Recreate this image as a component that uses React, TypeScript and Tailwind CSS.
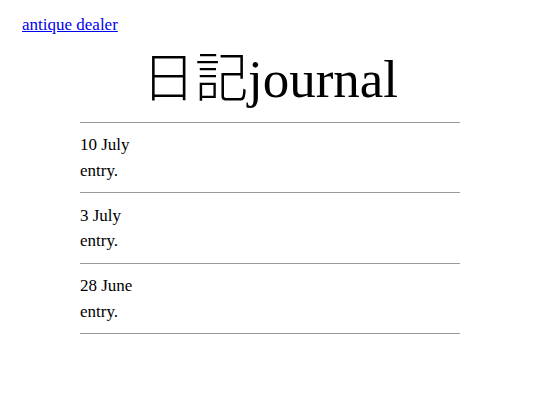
import React from "react";

const entries = [
  { date: "10 July", text: "entry." },
  { date: "3 July", text: "entry." },
  { date: "28 June", text: "entry." },
];

export default function App() {
  return (
    <div
      className="min-h-[405px] w-[540px] bg-white text-black text-[17px]"
      style={{ fontFamily: '"Liberation Serif", "Noto Sans CJK JP", serif' }}
    >
      <div className="pl-[22px] pt-[15px] leading-[19.5px]">
        <a href="#" className="text-[#0000ee] underline">
          antique dealer
        </a>
      </div>
      <h1 className="mt-[18px] text-center text-[53px] leading-[53px] font-normal">
        <span className="font-extralight">日記</span>journal
      </h1>
      <div className="mx-auto mt-[16.5px] w-[380px]">
        {entries.map((e) => (
          <div
            key={e.date}
            className="border-t border-[#9a9a9a] pt-[9.4px] pb-[9px] leading-[25.5px]"
          >
            <div>{e.date}</div>
            <div>{e.text}</div>
          </div>
        ))}
        <div className="border-t border-[#9a9a9a]" />
      </div>
    </div>
  );
}
